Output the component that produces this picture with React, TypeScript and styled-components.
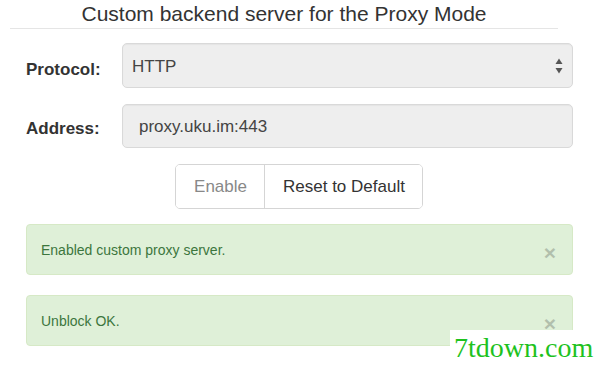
import React, { FC } from 'react';
import styled, { createGlobalStyle } from 'styled-components';

const GlobalStyle = createGlobalStyle`
  html, body {
    margin: 0;
    padding: 0;
    background: #fff;
  }
  body {
    font-family: 'Liberation Sans', Arial, Helvetica, sans-serif;
    color: #333;
  }
`;

const Page = styled.div`
  position: relative;
  width: 600px;
  height: 369px;
  overflow: hidden;
  background: #fff;
`;

const Header = styled.div`
  width: 548px;
  margin-left: 10px;
  padding: 2px 0 2px;
  border-bottom: 1px solid #e5e5e5;
`;

const Title = styled.h4`
  margin: 0;
  font-size: 21px;
  font-weight: 400;
  line-height: 24px;
  text-align: center;
  color: #333;
`;

const Form = styled.div`
  display: flex;
  flex-direction: column;
  gap: 16px;
  padding: 14px 0 0 26px;
  width: 547px;
`;

const Row = styled.div`
  display: flex;
  align-items: flex-start;
`;

const Label = styled.label<{ $offset: number }>`
  width: 96px;
  flex: none;
  padding-top: ${({ $offset }) => $offset}px;
  font-size: 17px;
  font-weight: 700;
  line-height: 20px;
  color: #333;
`;

const Field = styled.div<{ $height: number; $pad: number }>`
  flex: 1;
  box-sizing: border-box;
  height: ${({ $height }) => $height}px;
  display: flex;
  align-items: center;
  justify-content: space-between;
  padding: 2px 9px 0 ${({ $pad }) => $pad}px;
  background: #eee;
  border: 1px solid #d9d9d9;
  border-radius: 5px;
  box-shadow: inset 0 1px 1px rgba(0, 0, 0, 0.04);
  font-size: 17px;
  color: #444;
`;

const Arrows = styled.svg`
  flex: none;
  margin-top: -2px;
`;

const ButtonRow = styled.div`
  display: flex;
  justify-content: center;
  padding-right: 2px;
  margin-top: 16px;
`;

const Group = styled.div`
  display: flex;
  border: 1px solid #d5d5d5;
  border-radius: 5px;
  overflow: hidden;
`;

const Button = styled.button<{ $muted?: boolean }>`
  height: 43px;
  padding: 0 17px 0 18px;
  border: none;
  background: #fff;
  font-family: inherit;
  font-size: 17px;
  color: ${({ $muted }) => ($muted ? '#888' : '#333')};
  & + & {
    border-left: 1px solid #d5d5d5;
  }
`;

const Alerts = styled.div`
  display: flex;
  flex-direction: column;
  gap: 20px;
  margin: 15px 0 0 26px;
  width: 547px;
`;

const Alert = styled.div`
  box-sizing: border-box;
  height: 51px;
  display: flex;
  align-items: flex-start;
  justify-content: space-between;
  padding: 15px 16px 0 14px;
  background: #dff0d8;
  border: 1px solid #d6e9c6;
  border-radius: 4px;
  font-size: 14px;
  line-height: 20px;
  color: #3c763d;
`;

const Close = styled.span`
  font-size: 21px;
  font-weight: 700;
  line-height: 14px;
  padding-top: 6px;
  color: #000;
  opacity: 0.2;
`;

const Watermark = styled.div`
  position: absolute;
  left: 450px;
  top: 330px;
  width: 150px;
  height: 39px;
  background: #fff;
  font-family: 'Liberation Serif', 'Times New Roman', serif;
  font-size: 28px;
  line-height: 36px;
  padding-left: 4px;
  box-sizing: border-box;
  color: #1ec21e;
  white-space: nowrap;
`;

const SelectArrows: FC = () => (
  <Arrows width="8" height="16" viewBox="0 0 8 16">
    <path d="M4 0.5 L7.5 6 L0.5 6 Z" fill="#555" />
    <path d="M0.5 10 L7.5 10 L4 15.5 Z" fill="#555" />
  </Arrows>
);

const App: FC = () => (
  <Page>
    <GlobalStyle />
    <Header>
      <Title>Custom backend server for the Proxy Mode</Title>
    </Header>
    <Form>
      <Row>
        <Label $offset={17}>Protocol:</Label>
        <Field $height={45} $pad={9}>
          <span>HTTP</span>
          <SelectArrows />
        </Field>
      </Row>
      <Row>
        <Label $offset={15}>Address:</Label>
        <Field $height={44} $pad={16}>
          <span>proxy.uku.im:443</span>
        </Field>
      </Row>
    </Form>
    <ButtonRow>
      <Group>
        <Button $muted>Enable</Button>
        <Button>Reset to Default</Button>
      </Group>
    </ButtonRow>
    <Alerts>
      <Alert>
        <span>Enabled custom proxy server.</span>
        <Close>×</Close>
      </Alert>
      <Alert>
        <span>Unblock OK.</span>
        <Close>×</Close>
      </Alert>
    </Alerts>
    <Watermark>7tdown.com</Watermark>
  </Page>
);

export default App;
